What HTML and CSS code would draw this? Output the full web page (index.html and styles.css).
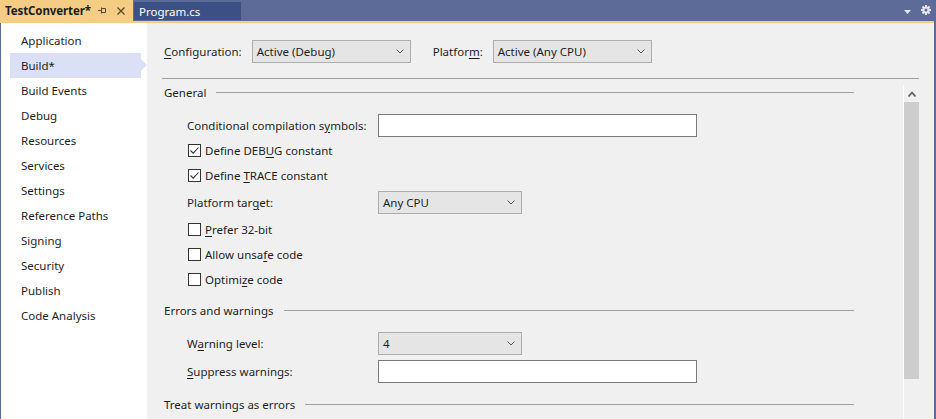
FILE: index.html
```html
<!DOCTYPE html>
<html>
<head>
<meta charset="utf-8">
<link rel="stylesheet" href="styles.css">
</head>
<body>
<div class="tabbar">
  <div class="tab tab-active">
    <span class="tab-title">TestConverter*</span>
    <svg class="pin" width="9" height="7" viewBox="0 0 9 7"><path d="M0 3.5H3.5M3.5 0.5V6.5M4 1.5H7.5V5.5H4" fill="none" stroke="#5a4a2a" stroke-width="1"/></svg>
    <svg class="close" width="8" height="8" viewBox="0 0 8 8"><path d="M0.5 0.5L7.5 7.5M7.5 0.5L0.5 7.5" stroke="#5a4a2a" stroke-width="1.3"/></svg>
  </div>
  <div class="tab tab-doc">Program.cs</div>
  <div class="tab-spacer"></div>
  <svg class="menu-drop" width="7" height="4" viewBox="0 0 7 4"><path d="M0 0H7L3.5 4Z" fill="#e3e6f2"/></svg>
  <svg class="gear" width="10" height="10" viewBox="0 0 10 10">
    <g fill="#e3e6f2">
      <rect x="4" y="0" width="2" height="10"/>
      <rect x="0" y="4" width="10" height="2"/>
      <rect x="4" y="0" width="2" height="10" transform="rotate(45 5 5)"/>
      <rect x="4" y="0" width="2" height="10" transform="rotate(-45 5 5)"/>
      <circle cx="5" cy="5" r="3.6"/>
    </g>
    <circle cx="5" cy="5" r="1.5" fill="#5d6b99"/>
  </svg>
</div>
<div class="accent"></div>
<div class="frame">
  <nav class="nav">
    <div class="nav-item">Application</div>
    <div class="nav-item selected">Build*</div>
    <div class="nav-item">Build Events</div>
    <div class="nav-item">Debug</div>
    <div class="nav-item">Resources</div>
    <div class="nav-item">Services</div>
    <div class="nav-item">Settings</div>
    <div class="nav-item">Reference Paths</div>
    <div class="nav-item">Signing</div>
    <div class="nav-item">Security</div>
    <div class="nav-item">Publish</div>
    <div class="nav-item">Code Analysis</div>
  </nav>
  <main class="main">
    <div class="toolbar">
      <span class="tool-label"><u>C</u>onfiguration:</span>
      <div class="combo combo-wide"><span>Active (Debug)</span><svg class="chev" width="8" height="5" viewBox="0 0 8 5"><path d="M0.5 0.5L4 4L7.5 0.5" fill="none" stroke="#555" stroke-width="1"/></svg></div>
      <span class="tool-label">Platfor<u>m</u>:</span>
      <div class="combo combo-wide"><span>Active (Any CPU)</span><svg class="chev" width="8" height="5" viewBox="0 0 8 5"><path d="M0.5 0.5L4 4L7.5 0.5" fill="none" stroke="#555" stroke-width="1"/></svg></div>
    </div>
    <div class="divider"></div>
    <div class="body">
      <div class="content">
        <div class="section">
          <span class="section-title">General</span><span class="section-line"></span>
        </div>
        <div class="row row-first">
          <span class="field-label">Conditional compilation s<u>y</u>mbols:</span>
          <div class="textbox"></div>
        </div>
        <div class="row">
          <span class="check checked"><svg width="11" height="11" viewBox="0 0 11 11"><path d="M1.5 5.5L4.2 8.2L9.5 2.5" fill="none" stroke="#333" stroke-width="1.1"/></svg></span>
          <span>Define DEB<u>U</u>G constant</span>
        </div>
        <div class="row">
          <span class="check checked"><svg width="11" height="11" viewBox="0 0 11 11"><path d="M1.5 5.5L4.2 8.2L9.5 2.5" fill="none" stroke="#333" stroke-width="1.1"/></svg></span>
          <span>Define <u>T</u>RACE constant</span>
        </div>
        <div class="row row-combo">
          <span class="field-label">Platform tar<u>g</u>et:</span>
          <div class="combo combo-field"><span>Any CPU</span><svg class="chev" width="8" height="5" viewBox="0 0 8 5"><path d="M0.5 0.5L4 4L7.5 0.5" fill="none" stroke="#555" stroke-width="1"/></svg></div>
        </div>
        <div class="row">
          <span class="check"></span>
          <span><u>P</u>refer 32-bit</span>
        </div>
        <div class="row">
          <span class="check"></span>
          <span>Allow unsa<u>f</u>e code</span>
        </div>
        <div class="row">
          <span class="check"></span>
          <span>Optimi<u>z</u>e code</span>
        </div>
        <div class="section section-errors">
          <span class="section-title">Errors and warnings</span><span class="section-line"></span>
        </div>
        <div class="row row-warn">
          <span class="field-label">W<u>a</u>rning level:</span>
          <div class="combo combo-field"><span>4</span><svg class="chev" width="8" height="5" viewBox="0 0 8 5"><path d="M0.5 0.5L4 4L7.5 0.5" fill="none" stroke="#555" stroke-width="1"/></svg></div>
        </div>
        <div class="row row-suppress">
          <span class="field-label"><u>S</u>uppress warnings:</span>
          <div class="textbox"></div>
        </div>
        <div class="section section-treat">
          <span class="section-title">Treat warnings as errors</span><span class="section-line"></span>
        </div>
      </div>
      <div class="scrollbar">
        <div class="scroll-up"><svg width="8" height="6" viewBox="0 0 8 6"><path d="M0.5 5.5L4 1.5L7.5 5.5" fill="none" stroke="#606060" stroke-width="1.8"/></svg></div>
        <div class="thumb"></div>
      </div>
    </div>
  </main>
</div>
</body>
</html>
```
FILE: styles.css
```css
* { box-sizing: border-box; }
html, body { margin: 0; padding: 0; }
body {
  width: 936px;
  height: 419px;
  overflow: hidden;
  background: #5d6b99;
  font-family: "Noto Sans", "Open Sans", sans-serif;
  font-size: 11.5px;
  color: #1e1e1e;
}
u { text-decoration: underline; text-underline-offset: 2px; }

.tabbar { display: flex; height: 21px; align-items: center; }
.tab { height: 21px; display: flex; align-items: center; white-space: nowrap; }
.tab-active {
  width: 133px;
  background: #f5cc84;
  padding-left: 5px;
  font-weight: bold;
  color: #1e1e1e;
  letter-spacing: -0.1px;
}
.tab-title { flex: 1; }
.pin { margin-right: 10px; }
.close { margin-right: 8px; }
.tab-doc {
  width: 107px;
  height: 18px;
  margin-left: 1px;
  margin-top: 1px;
  background: #3d5085;
  color: #ffffff;
  padding-left: 5px;
}
.tab-spacer { flex: 1; }
.menu-drop { margin-right: 10px; margin-top: 3px; }
.gear { margin-right: 5px; margin-top: -2px; }

.accent { height: 2px; background: #f5cc84; margin-right: 2px; }

.frame {
  display: flex;
  height: 396px;
  margin-left: 1px;
  margin-right: 2px;
}

.nav {
  width: 146px;
  background: #ffffff;
  padding-top: 5px;
}
.nav-item {
  position: relative;
  height: 25px;
  line-height: 25px;
  margin-left: 9px;
  width: 131px;
  padding-left: 11px;
  white-space: nowrap;
}
.nav-item.selected { background: #dce0f6; }
.nav-item.selected::after {
  content: "";
  position: absolute;
  right: -6px;
  top: 6px;
  border-left: 6px solid #dce0f6;
  border-top: 6px solid transparent;
  border-bottom: 6px solid transparent;
}

.main {
  flex: 1;
  background: #f0f0f0;
  display: flex;
  flex-direction: column;
  min-width: 0;
}
.toolbar {
  display: flex;
  padding-left: 17px;
  padding-top: 17px;
  height: 55px;
  align-items: flex-start;
}
.tool-label { line-height: 23px; margin-right: 10px; white-space: nowrap; }
.combo {
  height: 23px;
  background: #e5e5e5;
  border: 1px solid #adadad;
  display: flex;
  align-items: center;
  justify-content: space-between;
  padding-left: 4px;
  padding-right: 6px;
  white-space: nowrap;
}
.combo-wide { width: 159px; margin-right: 22px; }
.combo-field { width: 144px; }
.chev { flex: none; }

.divider {
  height: 1px;
  background: #a0a0a0;
  margin-left: 15px;
  margin-right: 15px;
}
.body {
  flex: 1;
  display: flex;
  margin-top: 5px;
  overflow: hidden;
}
.content {
  flex: 1;
  padding-left: 17px;
  padding-right: 49px;
  display: flex;
  flex-direction: column;
}
.section {
  display: flex;
  align-items: center;
  height: 16px;
  flex: none;
}
.section-title { white-space: nowrap; }
.section-line {
  flex: 1;
  height: 1px;
  background: #a0a0a0;
  margin-left: 10px;
}
.section-errors { margin-top: 10px; }
.section-treat { margin-top: 12px; }

.row {
  display: flex;
  align-items: center;
  height: 25px;
  padding-left: 23px;
  flex: none;
  white-space: nowrap;
}
.row-first { margin-top: 13px; }
.row-combo { height: 29px; }
.row-warn { margin-top: 13px; }
.row-suppress { margin-top: 3px; }
.field-label { width: 191px; }
.textbox {
  width: 319px;
  height: 23px;
  background: #ffffff;
  border: 1px solid #7a7a7a;
}
.check {
  width: 13px;
  height: 13px;
  margin-left: 1px;
  margin-right: 4px;
  border: 1px solid #333333;
  background: #ffffff;
  display: flex;
  align-items: center;
  justify-content: center;
}

.scrollbar {
  width: 16px;
  margin-right: 15px;
  margin-top: 1px;
  border-left: 1px solid #ffffff;
  background: #f0f0f0;
  display: flex;
  flex-direction: column;
}
.scroll-up {
  height: 17px;
  display: flex;
  align-items: center;
  justify-content: center;
}
.thumb {
  height: 277px;
  background: #cdcdcd;
}
```
